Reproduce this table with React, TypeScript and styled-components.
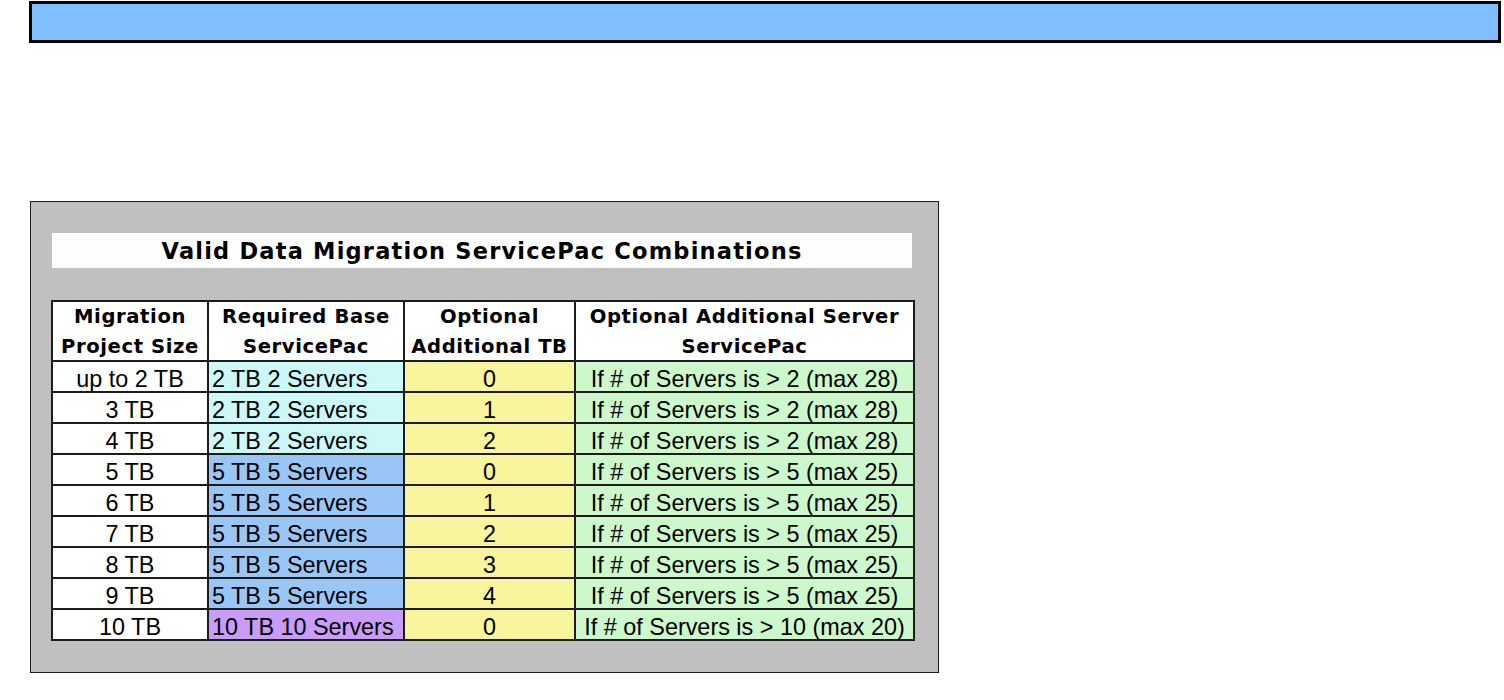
import React from "react";
import styled, { createGlobalStyle } from "styled-components";

const GlobalStyle = createGlobalStyle`
  html, body {
    margin: 0;
    padding: 0;
    background: #ffffff;
  }
  body {
    font-family: "Liberation Sans", Arial, sans-serif;
  }
`;

const Page = styled.div`
  padding-top: 1px;
  width: 1504px;
`;

const TopBar = styled.div`
  box-sizing: border-box;
  margin-left: 29px;
  width: 1472px;
  height: 42px;
  border: 3px solid #000000;
  background: #80bfff;
`;

const Panel = styled.section`
  box-sizing: border-box;
  margin: 158px 0 0 30px;
  width: 909px;
  height: 472px;
  padding: 31px 0 31px 20px;
  border: 1px solid #1e1e1e;
  background: #c0c0c0;
`;

const Title = styled.h1`
  box-sizing: border-box;
  margin: 0 0 0 1px;
  width: 860px;
  height: 35px;
  background: #fefefe;
  font-family: "DejaVu Sans", Verdana, sans-serif;
  font-weight: 700;
  font-size: 22.5px;
  line-height: 36px;
  letter-spacing: 1.2px;
  text-align: center;
  color: #000000;
`;

const Grid = styled.div`
  display: grid;
  grid-template-columns: 154px 194px 169px 337px;
  grid-template-rows: 58px repeat(9, 29px);
  gap: 2px;
  padding: 2px;
  margin-top: 32px;
  width: max-content;
  background: #1c1c1c;
`;

const HeadCell = styled.div`
  box-sizing: border-box;
  background: #ffffff;
  font-family: "DejaVu Sans", Verdana, sans-serif;
  font-weight: 700;
  font-size: 19.6px;
  line-height: 30px;
  letter-spacing: 0.6px;
  text-align: center;
  color: #000000;
  white-space: nowrap;
`;

const tones: Record<string, string> = {
  white: "#ffffff",
  cyan: "#ccf8f8",
  blue: "#9ac6f6",
  purple: "#c99cf7",
  yellow: "#f8f59c",
  green: "#ccf8cc",
};

const Cell = styled.div<{ $tone: string; $align?: "left" | "center" }>`
  box-sizing: border-box;
  height: 29px;
  padding: 5px 0 0 ${(p) => (p.$align === "left" ? "3px" : "0")};
  background: ${(p) => tones[p.$tone]};
  font-family: "Liberation Sans", Arial, sans-serif;
  font-size: 23.4px;
  line-height: 24px;
  text-align: ${(p) => p.$align ?? "center"};
  color: #000000;
  white-space: nowrap;
  overflow: hidden;
`;

type Row = {
  size: string;
  base: string;
  tone: string;
  extra: string;
  server: string;
};

const small = "If # of Servers is > 2 (max 28)";
const mid = "If # of Servers is > 5 (max 25)";

const rows: Row[] = [
  { size: "up to 2 TB", base: "2 TB 2 Servers", tone: "cyan", extra: "0", server: small },
  { size: "3 TB", base: "2 TB 2 Servers", tone: "cyan", extra: "1", server: small },
  { size: "4 TB", base: "2 TB 2 Servers", tone: "cyan", extra: "2", server: small },
  { size: "5 TB", base: "5 TB 5 Servers", tone: "blue", extra: "0", server: mid },
  { size: "6 TB", base: "5 TB 5 Servers", tone: "blue", extra: "1", server: mid },
  { size: "7 TB", base: "5 TB 5 Servers", tone: "blue", extra: "2", server: mid },
  { size: "8 TB", base: "5 TB 5 Servers", tone: "blue", extra: "3", server: mid },
  { size: "9 TB", base: "5 TB 5 Servers", tone: "blue", extra: "4", server: mid },
  {
    size: "10 TB",
    base: "10 TB 10 Servers",
    tone: "purple",
    extra: "0",
    server: "If # of Servers is > 10 (max 20)",
  },
];

export default function App() {
  return (
    <Page>
      <GlobalStyle />
      <TopBar />
      <Panel>
        <Title>Valid Data Migration ServicePac Combinations</Title>
        <Grid>
          <HeadCell>
            Migration
            <br />
            Project Size
          </HeadCell>
          <HeadCell>
            Required Base
            <br />
            ServicePac
          </HeadCell>
          <HeadCell>
            Optional
            <br />
            Additional TB
          </HeadCell>
          <HeadCell>
            Optional Additional Server
            <br />
            ServicePac
          </HeadCell>
          {rows.map((r, i) => (
            <React.Fragment key={i}>
              <Cell $tone="white">{r.size}</Cell>
              <Cell $tone={r.tone} $align="left">
                {r.base}
              </Cell>
              <Cell $tone="yellow">{r.extra}</Cell>
              <Cell $tone="green">{r.server}</Cell>
            </React.Fragment>
          ))}
        </Grid>
      </Panel>
    </Page>
  );
}
